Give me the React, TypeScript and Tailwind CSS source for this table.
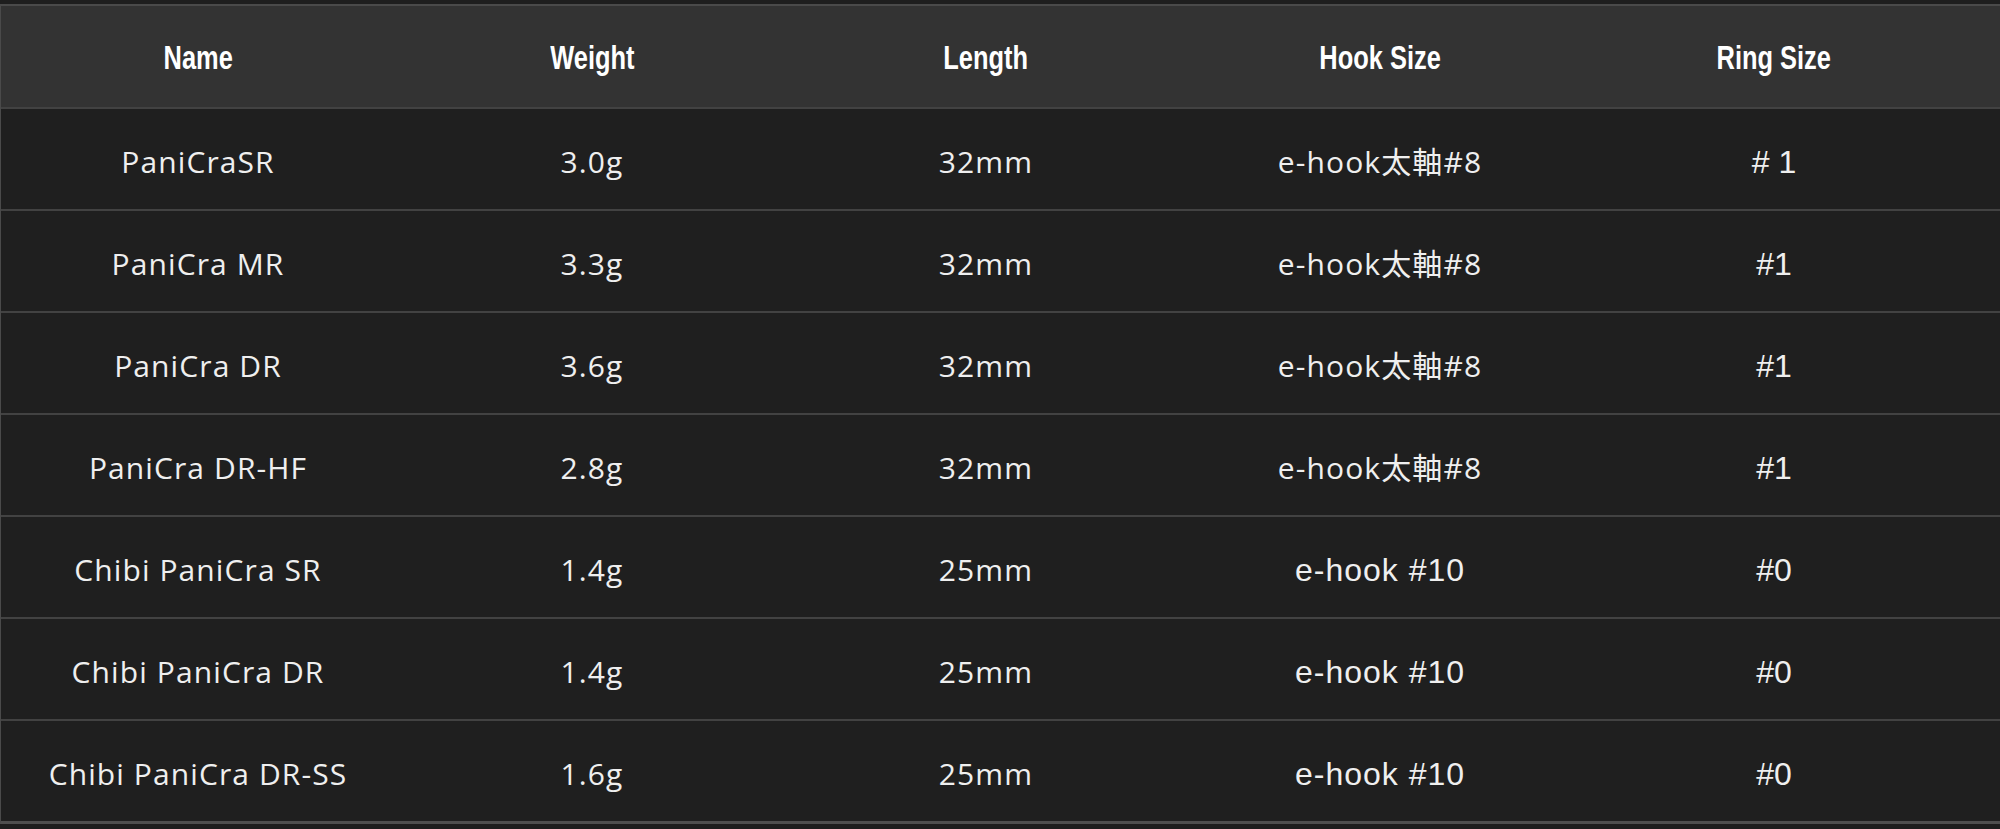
import React from "react";

type Row = { name: string; weight: string; length: string; hook: string; ring: string; hookArial?: boolean };

const rows: Row[] = [
  { name: "PaniCraSR", weight: "3.0g", length: "32mm", hook: "e-hook太軸#8", ring: "# 1" },
  { name: "PaniCra MR", weight: "3.3g", length: "32mm", hook: "e-hook太軸#8", ring: "#1" },
  { name: "PaniCra DR", weight: "3.6g", length: "32mm", hook: "e-hook太軸#8", ring: "#1" },
  { name: "PaniCra DR-HF", weight: "2.8g", length: "32mm", hook: "e-hook太軸#8", ring: "#1" },
  { name: "Chibi PaniCra SR", weight: "1.4g", length: "25mm", hook: "e-hook #10", ring: "#0", hookArial: true },
  { name: "Chibi PaniCra DR", weight: "1.4g", length: "25mm", hook: "e-hook #10", ring: "#0", hookArial: true },
  { name: "Chibi PaniCra DR-SS", weight: "1.6g", length: "25mm", hook: "e-hook #10", ring: "#0", hookArial: true },
];

const headers = ["Name", "Weight", "Length", "Hook Size", "Ring Size"];

const body = "font-['Open_Sans','Noto_Sans_CJK_JP',sans-serif] text-[30px] tracking-[1.1px]";
const arial = "font-['Liberation_Sans',sans-serif] text-[32px]";
const arialHook = "font-['Liberation_Sans',sans-serif] text-[32px] tracking-[1px]";

export default function App() {
  return (
    <div className="w-[2000px] h-[829px] bg-[#1e1e1e] pt-[4px] overflow-hidden">
      <div className="border-t-2 border-l border-[#4a4a4a] border-b-[3px] border-b-[#4f4f4f]">
        <div className="grid grid-cols-[repeat(5,394px)_1fr] h-[101px] pt-[4px] bg-[#333333] items-center text-white">
          {headers.map((h) => (
            <div key={h} className="text-center">
              <span className="inline-block font-['Liberation_Sans',sans-serif] font-bold text-[31px] scale-x-[0.82] scale-y-[1.1]">
                {h}
              </span>
            </div>
          ))}
          <div />
        </div>
        {rows.map((r, i) => (
          <div
            key={i}
            className="grid grid-cols-[repeat(5,394px)_1fr] h-[102px] pt-[5px] border-t-2 border-[#424242] bg-[#1f1f1f] items-center text-[#efefef]"
          >
            <div className={`text-center ${body}`}>{r.name}</div>
            <div className={`text-center ${body}`}>{r.weight}</div>
            <div className={`text-center ${body}`}>{r.length}</div>
            <div className={`text-center ${r.hookArial ? arialHook : body}`}>{r.hook}</div>
            <div className={`text-center ${arial}`}>{r.ring}</div>
            <div />
          </div>
        ))}
      </div>
    </div>
  );
}
